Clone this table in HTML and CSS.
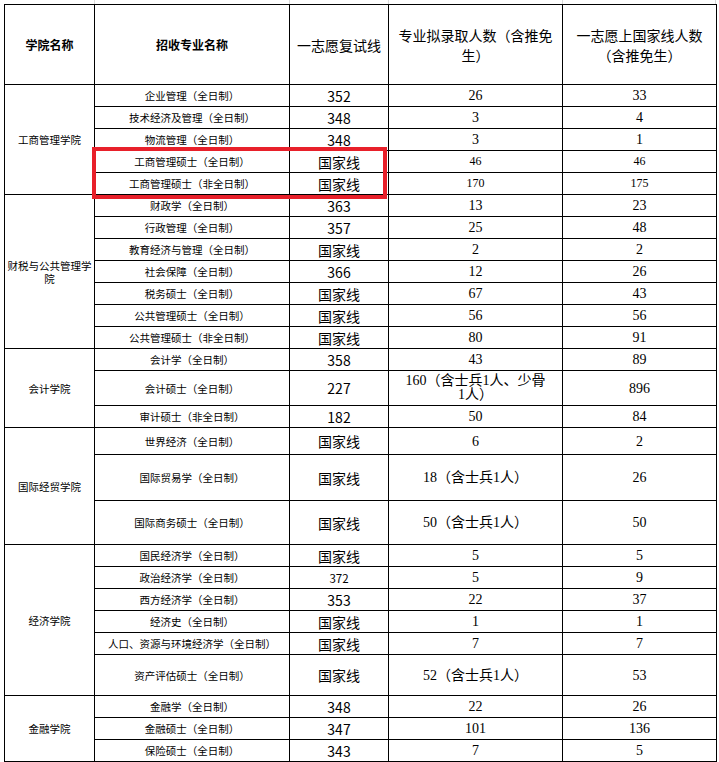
FILE: index.html
```html
<!DOCTYPE html>
<html lang="zh-CN">
<head>
<meta charset="utf-8">
<title>复试分数线及录取人数</title>
<link rel="stylesheet" href="styles.css">
</head>
<body>
<div class="sheet">
  <div class="ruler" aria-hidden="true">
    <span class="r1"></span><span class="r2"></span><span class="r3"></span><span class="r4"></span><span class="r5"></span>
  </div>
  <table class="grid">
    <colgroup>
      <col class="c1"><col class="c2"><col class="c3"><col class="c4"><col class="c5">
    </colgroup>
    <thead>
      <tr class="head">
        <th class="hb">学院名称</th>
        <th class="hb">招收专业名称</th>
        <th class="hl">一志愿复试线</th>
        <th class="hl">专业拟录取人数（含推免<br>生）</th>
        <th class="hl">一志愿上国家线人数<br>（含推免生）</th>
      </tr>
    </thead>
    <tbody>
      <tr><td rowspan="5" class="col">工商管理学院</td><td class="maj">企业管理（全日制）</td><td class="cut">352</td><td class="num">26</td><td class="num">33</td></tr>
      <tr><td class="maj">技术经济及管理（全日制）</td><td class="cut">348</td><td class="num">3</td><td class="num">4</td></tr>
      <tr><td class="maj">物流管理（全日制）</td><td class="cut">348</td><td class="num">3</td><td class="num">1</td></tr>
      <tr><td class="maj">工商管理硕士（全日制）</td><td class="cut">国家线</td><td class="num sm">46</td><td class="num sm">46</td></tr>
      <tr><td class="maj">工商管理硕士（非全日制）</td><td class="cut">国家线</td><td class="num sm">170</td><td class="num sm">175</td></tr>

      <tr><td rowspan="7" class="col">财税与公共管理学院</td><td class="maj">财政学（全日制）</td><td class="cut">363</td><td class="num">13</td><td class="num">23</td></tr>
      <tr><td class="maj">行政管理（全日制）</td><td class="cut">357</td><td class="num">25</td><td class="num">48</td></tr>
      <tr><td class="maj">教育经济与管理（全日制）</td><td class="cut">国家线</td><td class="num">2</td><td class="num">2</td></tr>
      <tr><td class="maj">社会保障（全日制）</td><td class="cut">366</td><td class="num">12</td><td class="num">26</td></tr>
      <tr><td class="maj">税务硕士（全日制）</td><td class="cut">国家线</td><td class="num">67</td><td class="num">43</td></tr>
      <tr><td class="maj">公共管理硕士（全日制）</td><td class="cut">国家线</td><td class="num">56</td><td class="num">56</td></tr>
      <tr><td class="maj">公共管理硕士（非全日制）</td><td class="cut">国家线</td><td class="num">80</td><td class="num">91</td></tr>

      <tr><td rowspan="3" class="col">会计学院</td><td class="maj">会计学（全日制）</td><td class="cut">358</td><td class="num">43</td><td class="num">89</td></tr>
      <tr class="h35"><td class="maj">会计硕士（全日制）</td><td class="cut">227</td><td class="num two">160（含士兵1人、少骨<br>1人）</td><td class="num">896</td></tr>
      <tr><td class="maj">审计硕士（非全日制）</td><td class="cut">182</td><td class="num">50</td><td class="num">84</td></tr>

      <tr class="h27"><td rowspan="3" class="col">国际经贸学院</td><td class="maj">世界经济（全日制）</td><td class="cut">国家线</td><td class="num">6</td><td class="num">2</td></tr>
      <tr class="h46"><td class="maj">国际贸易学（全日制）</td><td class="cut">国家线</td><td class="num">18（含士兵1人）</td><td class="num">26</td></tr>
      <tr class="h44"><td class="maj">国际商务硕士（全日制）</td><td class="cut">国家线</td><td class="num">50（含士兵1人）</td><td class="num">50</td></tr>

      <tr><td rowspan="6" class="col">经济学院</td><td class="maj">国民经济学（全日制）</td><td class="cut">国家线</td><td class="num">5</td><td class="num">5</td></tr>
      <tr><td class="maj">政治经济学（全日制）</td><td class="cut sm">372</td><td class="num">5</td><td class="num">9</td></tr>
      <tr><td class="maj">西方经济学（全日制）</td><td class="cut">353</td><td class="num">22</td><td class="num">37</td></tr>
      <tr><td class="maj">经济史（全日制）</td><td class="cut">国家线</td><td class="num">1</td><td class="num">1</td></tr>
      <tr><td class="maj">人口、资源与环境经济学（全日制）</td><td class="cut">国家线</td><td class="num">7</td><td class="num">7</td></tr>
      <tr class="h41"><td class="maj">资产评估硕士（全日制）</td><td class="cut">国家线</td><td class="num">52（含士兵1人）</td><td class="num">53</td></tr>

      <tr><td rowspan="3" class="col">金融学院</td><td class="maj">金融学（全日制）</td><td class="cut">348</td><td class="num">22</td><td class="num">26</td></tr>
      <tr><td class="maj">金融硕士（全日制）</td><td class="cut">347</td><td class="num">101</td><td class="num">136</td></tr>
      <tr><td class="maj">保险硕士（全日制）</td><td class="cut">343</td><td class="num">7</td><td class="num">5</td></tr>
    </tbody>
  </table>
  <div class="mark" aria-hidden="true"></div>
</div>
</body>
</html>
```

FILE: styles.css
```css
html, body {
  margin: 0;
  padding: 0;
  background: #fff;
}

body {
  font-family: "Noto Sans CJK SC", "Noto Sans", sans-serif;
  color: #000;
}

.sheet {
  position: relative;
  width: 719px;
  height: 762px;
  padding: 0 0 0 4px;
  box-sizing: border-box;
  overflow: hidden;
}

.ruler {
  display: flex;
  height: 4px;
  padding-left: 1px;
}

.ruler span {
  flex: none;
  height: 4px;
  border-right: 1px solid #d9d9d9;
  box-sizing: border-box;
}

.ruler .r1 { width: 90px; }
.ruler .r2 { width: 195px; }
.ruler .r3 { width: 99px; }
.ruler .r4 { width: 174px; }
.ruler .r5 { width: 153px; }

.grid {
  border-collapse: collapse;
  table-layout: fixed;
  width: 712px;
}

.c1 { width: 90px; }
.c2 { width: 195px; }
.c3 { width: 99px; }
.c4 { width: 174px; }
.c5 { width: 154px; }

.grid th,
.grid td {
  border: 1px solid #000;
  padding: 0 3px;
  text-align: center;
  vertical-align: middle;
  overflow: hidden;
}

.grid tbody tr { height: 22px; }
.grid .head { height: 80px; }
.grid .h27 { height: 27px; }
.grid .h35 { height: 35px; }
.grid .h41 { height: 41px; }
.grid .h44 { height: 44px; }
.grid .h46 { height: 46px; }

.hb {
  font-size: 12px;
  font-weight: 700;
  line-height: 14px;
}

.hl {
  font-size: 14px;
  font-weight: 400;
  line-height: 20px;
}

.grid .col {
  font-size: 10.5px;
  line-height: 13px;
  padding: 0 1px;
}

.maj {
  font-size: 10.5px;
  line-height: 13px;
  white-space: nowrap;
}

.cut {
  font-size: 14px;
  line-height: 16px;
}

.cut.sm {
  font-size: 11.5px;
}

.num {
  font-family: "Liberation Serif", "Noto Sans CJK SC", serif;
  font-size: 14px;
  line-height: 15px;
}

.num.sm {
  font-size: 12px;
}

.num.two {
  line-height: 14px;
}

.mark {
  position: absolute;
  left: 92px;
  top: 147px;
  width: 295px;
  height: 52px;
  border: 4px solid #e8202a;
  box-sizing: border-box;
}
```
